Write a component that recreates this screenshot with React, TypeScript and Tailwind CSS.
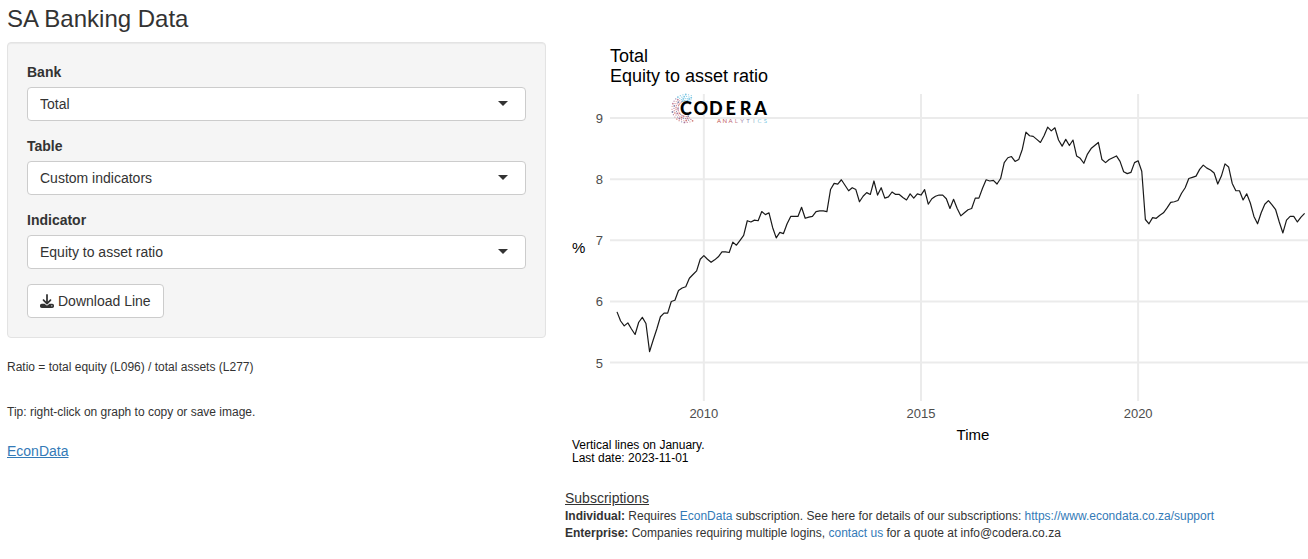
import { FaDownload } from "react-icons/fa6";

// monthly, January 2008 to November 2023
const ratios = [
  5.83, 5.68, 5.6, 5.65, 5.55, 5.46, 5.66, 5.74, 5.64, 5.18, 5.37, 5.55,
  5.75, 5.81, 5.81, 6.0, 6.02, 6.18, 6.22, 6.24, 6.38, 6.44, 6.5, 6.69,
  6.75, 6.69, 6.64, 6.68, 6.73, 6.81, 6.81, 6.8, 6.97, 6.92, 7.0, 7.08,
  7.32, 7.3, 7.33, 7.32, 7.47, 7.42, 7.45, 7.21, 7.04, 7.13, 7.11, 7.27,
  7.39, 7.39, 7.39, 7.54, 7.36, 7.38, 7.39, 7.47, 7.48, 7.48, 7.47, 7.83,
  7.93, 7.92, 7.99, 7.9, 7.81, 7.86, 7.83, 7.63, 7.72, 7.78, 7.75, 7.97,
  7.74, 7.86, 7.69, 7.71, 7.79, 7.75, 7.75, 7.7, 7.66, 7.76, 7.69, 7.76,
  7.74, 7.83, 7.59, 7.68, 7.72, 7.74, 7.74, 7.68, 7.52, 7.67, 7.52, 7.4,
  7.45, 7.5, 7.52, 7.69, 7.69, 7.85, 7.99, 7.97, 7.98, 7.92, 8.01, 8.27,
  8.35, 8.37, 8.29, 8.32, 8.49, 8.77, 8.71, 8.7, 8.65, 8.6, 8.71, 8.85,
  8.79, 8.84, 8.64, 8.54, 8.65, 8.55, 8.64, 8.38, 8.34, 8.26, 8.41, 8.5,
  8.55, 8.6, 8.32, 8.27, 8.32, 8.35, 8.38, 8.29, 8.12, 8.09, 8.11, 8.27,
  8.3, 8.13, 7.34, 7.27, 7.37, 7.36, 7.41, 7.45, 7.53, 7.62, 7.63, 7.65,
  7.77, 7.86, 8.01, 8.03, 8.05, 8.16, 8.23, 8.18, 8.15, 8.1, 7.92, 8.05,
  8.25, 8.2, 7.93, 7.81, 7.81, 7.66, 7.76, 7.61, 7.39, 7.27, 7.45, 7.59,
  7.65, 7.58, 7.5, 7.3, 7.12, 7.33, 7.39, 7.39, 7.3, 7.38, 7.44,
];

const xAt = (month: number) => 52 + month * 3.619;
const yAt = (value: number) => 78 + (9 - value) * 61.15;

const fields = [
  { id: "bank", label: "Bank", options: ["Total"] },
  { id: "table", label: "Table", options: ["Custom indicators"] },
  { id: "indicator", label: "Indicator", options: ["Equity to asset ratio"] },
];

const dotColors = ["#c0504d", "#8e4a7c", "#d98880", "#5b5b8c", "#b0587a"];
const analyticsColors = [
  "#c0504d",
  "#c4575c",
  "#b8606e",
  "#c98a90",
  "#a98ab0",
  "#8f8fb8",
  "#93b4cc",
  "#8ccbe0",
  "#7cc8e4",
];

function Logo() {
  const dots = [];
  for (let ring = 0; ring < 4; ring++) {
    const radius = 14 - ring * 2;
    for (let i = 0; i < 21; i++) {
      const angle = ((62 + i * 11.5 + ring * 4) * Math.PI) / 180;
      const upperRight = i > 14;
      dots.push(
        <circle
          key={`${ring}-${i}`}
          cx={121 + radius * Math.cos(angle)}
          cy={68.5 + radius * Math.sin(angle)}
          r={(i + ring) % 3 === 0 ? 0.9 : 0.6}
          fill={upperRight ? "#4fb3d9" : dotColors[(i * 2 + ring) % 5]}
          opacity={0.75}
        />
      );
    }
  }
  return (
    <g textAnchor="middle">
      {dots}
      <g className="font-[Lato,sans-serif] text-[18px] font-black">
        {"CODERA".split("").map((letter, i) => (
          <text key={i} x={121 + i * 14.9} y={75}>
            {letter}
          </text>
        ))}
      </g>
      <g className="font-[Lato,sans-serif] text-[6px]">
        {"ANALYTICS".split("").map((letter, i) => (
          <text key={i} x={154 + i * 5.8} y={83} fill={analyticsColors[i]}>
            {letter}
          </text>
        ))}
      </g>
    </g>
  );
}

function Chart() {
  const points = ratios.map((v, i) => `${xAt(i)},${yAt(v)}`).join(" ");

  return (
    <svg
      viewBox="0 0 743 430"
      className="block h-auto w-full"
      role="img"
      aria-label="Equity to asset ratio"
    >
      <g className="text-[18px]">
        <text x={45} y={22}>
          Total
        </text>
        <text x={45} y={42}>
          Equity to asset ratio
        </text>
      </g>
      <g stroke="#ebebeb" strokeWidth={2}>
        {[5, 6, 7, 8, 9].map((v) => (
          <line key={v} x1={45} x2={743} y1={yAt(v)} y2={yAt(v)} />
        ))}
        {[24, 84, 144].map((m) => (
          <line key={m} x1={xAt(m)} x2={xAt(m)} y1={54} y2={361} />
        ))}
      </g>
      <g className="text-[13px]" fill="#4d4d4d">
        {[5, 6, 7, 8, 9].map((v) => (
          <text key={v} x={38} y={yAt(v) + 5} textAnchor="end">
            {v}
          </text>
        ))}
        {[2010, 2015, 2020].map((year) => (
          <text
            key={year}
            x={xAt((year - 2008) * 12)}
            y={378}
            textAnchor="middle"
          >
            {year}
          </text>
        ))}
      </g>
      <polyline
        points={points}
        fill="none"
        stroke="#1a1a1a"
        strokeWidth={1.2}
        strokeLinejoin="round"
      />
      <Logo />
      <g className="text-[15px]">
        <text x={7} y={213}>
          %
        </text>
        <text x={408} y={400} textAnchor="middle">
          Time
        </text>
      </g>
      <g className="text-[12px]">
        <text x={7} y={409}>
          Vertical lines on January.
        </text>
        <text x={7} y={422}>
          Last date: 2023-11-01
        </text>
      </g>
    </svg>
  );
}

export default function App() {
  return (
    <main className="bg-white pl-[7px] font-['Liberation_Sans',Arial,sans-serif] text-sm text-[#333333]">
      <h1 className="pt-[5px] text-2xl leading-[27px]">SA Banking Data</h1>
      <div className="grid grid-cols-[539fr_743fr] gap-[19px]">
        <div className="pt-[10px]">
          <form className="rounded border border-[#e3e3e3] bg-[#f5f5f5] p-[19px] shadow-[inset_0_1px_1px_rgba(0,0,0,0.05)]">
            {fields.map((field) => (
              <div key={field.id} className="mb-[15px]">
                <label
                  htmlFor={field.id}
                  className="mb-[5px] block font-bold leading-5"
                >
                  {field.label}
                </label>
                <div className="relative">
                  <select
                    id={field.id}
                    className="block h-[34px] w-full appearance-none rounded border border-[#cccccc] bg-white px-3 leading-5"
                  >
                    {field.options.map((option) => (
                      <option key={option}>{option}</option>
                    ))}
                  </select>
                  <svg
                    viewBox="0 0 10 5"
                    className="pointer-events-none absolute right-[18px] top-[14px] h-[5px] w-[10px]"
                  >
                    <path d="M0 0h10L5 5z" fill="#333333" />
                  </svg>
                </div>
              </div>
            ))}
            <button
              type="button"
              className="flex h-[34px] items-center gap-1 rounded border border-[#cccccc] bg-white px-3"
            >
              <FaDownload className="size-[14px]" />
              Download Line
            </button>
          </form>
          <p className="mt-5 text-xs leading-[18px]">
            Ratio = total equity (L096) / total assets (L277)
          </p>
          <p className="mt-7 text-xs leading-[17px]">
            Tip: right-click on graph to copy or save image.
          </p>
          <a
            href="https://www.econdata.co.za"
            className="mt-5 inline-block leading-5 text-[#337ab7] underline"
          >
            EconData
          </a>
        </div>
        <div className="pt-2">
          <div className="text-black">
            <Chart />
          </div>
          <section className="mt-[18px]">
            <h2 className="leading-5 underline">Subscriptions</h2>
            <p className="text-xs leading-[17px]">
              <b>Individual:</b> Requires{" "}
              <a href="https://www.econdata.co.za" className="text-[#337ab7]">
                EconData
              </a>{" "}
              subscription. See here for details of our subscriptions:{" "}
              <a
                href="https://www.econdata.co.za/support"
                className="text-[#337ab7]"
              >
                https://www.econdata.co.za/support
              </a>
            </p>
            <p className="text-xs leading-[17px]">
              <b>Enterprise:</b> Companies requiring multiple logins,{" "}
              <a href="mailto:info@codera.co.za" className="text-[#337ab7]">
                contact us
              </a>{" "}
              for a quote at info@codera.co.za
            </p>
          </section>
        </div>
      </div>
    </main>
  );
}
